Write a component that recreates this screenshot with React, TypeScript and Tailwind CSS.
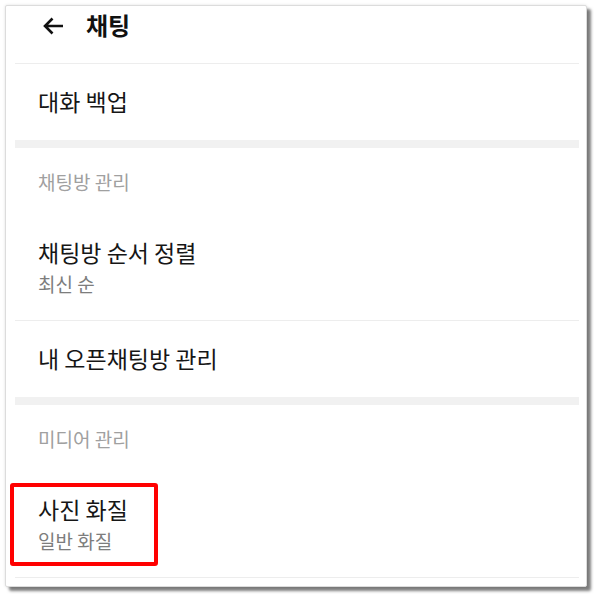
import React from "react";

const font = { fontFamily: '"Noto Sans CJK KR", "Noto Sans", sans-serif' };

function Divider() {
  return <div className="h-px bg-[#ededed]" />;
}

function Band() {
  return <div className="h-[8px] bg-[#f1f1f1]" />;
}

function SectionHeader({ label }: { label: string }) {
  return (
    <div className="h-[66px] pt-[21px] pl-[23px]">
      <div className="text-[19px] leading-[26px] text-[#a0a0a0]">{label}</div>
    </div>
  );
}

function Item({ title, sub }: { title: string; sub?: string }) {
  if (!sub) {
    return (
      <div className="h-[76px] flex items-center pl-[23px] pb-[2px]">
        <div className="text-[23px] leading-[30px] text-[#161616]">{title}</div>
      </div>
    );
  }
  return (
    <div className="pt-[23px] pb-[23px] pl-[23px]">
      <div className="text-[23px] leading-[30px] text-[#161616]">{title}</div>
      <div className="mt-[4px] text-[19px] leading-[26px] text-[#7d7d7d]">{sub}</div>
    </div>
  );
}

export default function App() {
  return (
    <div className="w-[600px] h-[600px] bg-white" style={font}>
      <div className="pt-[5px] pl-[5px]">
        <div className="relative w-[582px] h-[582px] bg-white border border-[#dcdcdc] rounded-[2px] shadow-[0_0_3px_rgba(0,0,0,0.12),4px_4px_3px_rgba(0,0,0,0.5)] pl-[9px] pr-[7px]">
          <div className="h-[57px] flex items-start pt-[3px] pl-[27px]">
            <div className="h-[32px] flex items-center">
              <svg width="22" height="20" viewBox="0 0 22 20" className="mt-[2px]">
                <path
                  d="M21 10H3M10.5 2.5L3 10l7.5 7.5"
                  fill="none"
                  stroke="#111"
                  strokeWidth="2.6"
                  strokeLinecap="butt"
                  strokeLinejoin="miter"
                />
              </svg>
            </div>
            <div className="ml-[22px] text-[24px] leading-[32px] font-semibold text-[#111]">채팅</div>
          </div>
          <Divider />
          <Item title="대화 백업" />
          <Band />
          <SectionHeader label="채팅방 관리" />
          <Item title="채팅방 순서 정렬" sub="최신 순" />
          <Divider />
          <Item title="내 오픈채팅방 관리" />
          <Band />
          <SectionHeader label="미디어 관리" />
          <Item title="사진 화질" sub="일반 화질" />
          <Divider />
          <div className="absolute left-[4px] top-[477px] w-[148px] h-[83px] border-[4px] border-[#ff0000] rounded-[3px]" />
        </div>
      </div>
    </div>
  );
}
